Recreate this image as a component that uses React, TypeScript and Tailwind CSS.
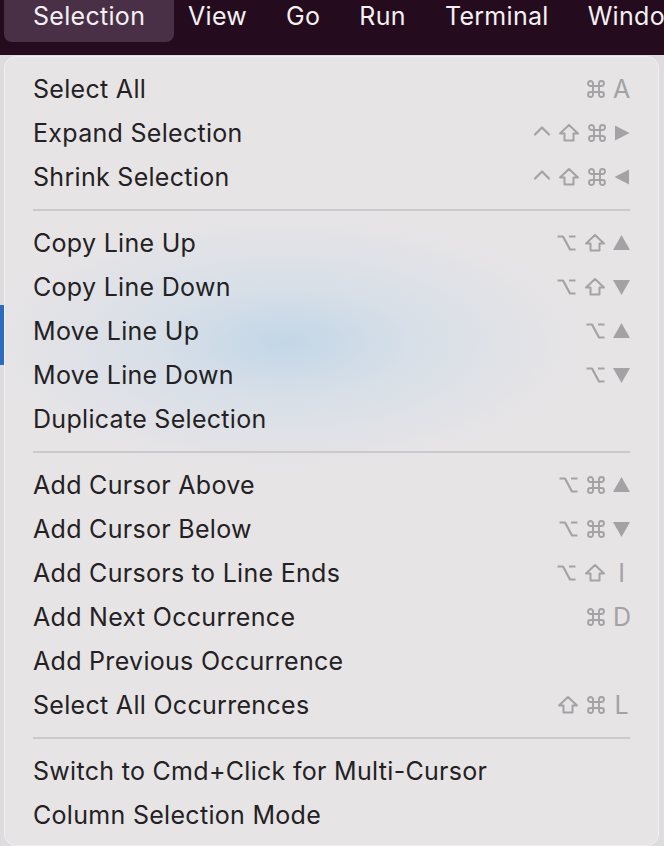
import React from "react";

type Key = "cmd" | "shift" | "ctrl" | "opt" | "right" | "left" | "up" | "down" | string;

type Item = { label: string; keys?: Key[] };

const groups: Item[][] = [
  [
    { label: "Select All", keys: ["cmd", "A"] },
    { label: "Expand Selection", keys: ["ctrl", "shift", "cmd", "right"] },
    { label: "Shrink Selection", keys: ["ctrl", "shift", "cmd", "left"] },
  ],
  [
    { label: "Copy Line Up", keys: ["opt", "shift", "up"] },
    { label: "Copy Line Down", keys: ["opt", "shift", "down"] },
    { label: "Move Line Up", keys: ["opt", "up"] },
    { label: "Move Line Down", keys: ["opt", "down"] },
    { label: "Duplicate Selection" },
  ],
  [
    { label: "Add Cursor Above", keys: ["opt", "cmd", "up"] },
    { label: "Add Cursor Below", keys: ["opt", "cmd", "down"] },
    { label: "Add Cursors to Line Ends", keys: ["opt", "shift", "I"] },
    { label: "Add Next Occurrence", keys: ["cmd", "D"] },
    { label: "Add Previous Occurrence" },
    { label: "Select All Occurrences", keys: ["shift", "cmd", "L"] },
  ],
  [{ label: "Switch to Cmd+Click for Multi-Cursor" }, { label: "Column Selection Mode" }],
];

const gray = "#a4a2a4";

function KeyGlyph({ k }: { k: Key }) {
  const stroke = { fill: "none", stroke: gray, strokeWidth: 2.2, strokeLinejoin: "round" as const, strokeLinecap: "round" as const };
  switch (k) {
    case "cmd":
      return (
        <svg width="20" height="20" viewBox="0 0 20 20">
          <path
            d="M7 7V4.5A2.5 2.5 0 1 0 4.5 7H15.5A2.5 2.5 0 1 0 13 4.5V15.5A2.5 2.5 0 1 0 15.5 13H4.5A2.5 2.5 0 1 0 7 15.5Z"
            {...stroke}
            strokeWidth={1.9}
          />
        </svg>
      );
    case "shift":
      return (
        <svg width="22" height="20" viewBox="0 0 22 20">
          <path d="M11 2L20 10.5H15.5V17.5H6.5V10.5H2Z" {...stroke} strokeWidth={2} />
        </svg>
      );
    case "ctrl":
      return (
        <svg width="18" height="20" viewBox="0 0 18 20">
          <path d="M2 11.5L9 4.5L16 11.5" {...stroke} />
        </svg>
      );
    case "opt":
      return (
        <svg width="21" height="20" viewBox="0 0 21 20">
          <path d="M1.5 3.5H7L14 16.5H19.5M13 3.5H19.5" {...stroke} strokeLinecap="butt" />
        </svg>
      );
    case "right":
      return (
        <svg width="16" height="20" viewBox="0 0 16 20">
          <path d="M1 2.5L15.5 10L1 17.5Z" fill={gray} />
        </svg>
      );
    case "left":
      return (
        <svg width="16" height="20" viewBox="0 0 16 20">
          <path d="M15 2.5L0.5 10L15 17.5Z" fill={gray} />
        </svg>
      );
    case "up":
      return (
        <svg width="17" height="20" viewBox="0 0 17 20">
          <path d="M8.5 2L17 17H0Z" fill={gray} />
        </svg>
      );
    case "down":
      return (
        <svg width="17" height="20" viewBox="0 0 17 20">
          <path d="M0 3H17L8.5 18Z" fill={gray} />
        </svg>
      );
    default:
      return <span className="w-[17px] text-center text-[25px] leading-none text-[#a4a2a4]">{k}</span>;
  }
}

function Row({ item }: { item: Item }) {
  return (
    <div className="flex h-[44px] items-center justify-between">
      <span className="text-[25px] leading-none tracking-[0.3px] text-[#232123]">{item.label}</span>
      {item.keys && (
        <span className="flex items-center gap-[7px]">
          {item.keys.map((k, i) => (
            <KeyGlyph key={i} k={k} />
          ))}
        </span>
      )}
    </div>
  );
}

export default function App() {
  const menus = ["View", "Go", "Run", "Terminal", "Window"];
  return (
    <div
      className="relative h-[846px] w-[664px] overflow-hidden bg-[#dedcde]"
      style={{ fontFamily: "Inter, 'Noto Sans', sans-serif" }}
    >
      {/* menu bar */}
      <div className="flex h-[55px] items-start whitespace-nowrap bg-[#240c1e] text-[25px] tracking-[0.3px] text-[#f4f0f3]">
        <div className="ml-[4px] flex h-[42px] w-[170px] shrink-0 items-center rounded-b-[8px] bg-[#4a3047] pl-[29px] pb-[8px]">
          Selection
        </div>
        <div className="flex h-[34px] shrink-0 items-center gap-[39px] pl-[14px]">
          {menus.map((m) => (
            <span key={m}>{m}</span>
          ))}
        </div>
      </div>

      {/* window behind */}
      <div className="absolute left-0 top-[305px] h-[60px] w-[4px] bg-[#2d6bbf]" />

      {/* dropdown */}
      <div className="absolute left-[4px] top-[56px] w-[655px] overflow-hidden rounded-[12px] border border-[#f1eff1] bg-[#e7e4e6]">
        <div className="pointer-events-none absolute inset-0 bg-[radial-gradient(ellipse_300px_130px_at_280px_285px,rgba(186,211,232,0.8),rgba(202,219,233,0.5)_45%,rgba(231,228,230,0)_100%)]" />
        <div className="relative px-[28px] pt-[10px] pb-[8px]">
          {groups.map((g, gi) => (
            <div key={gi}>
              {gi > 0 && (
                <div className="flex h-[22px] items-center">
                  <div className="h-[2px] w-full bg-[#cbc9cb]" />
                </div>
              )}
              {g.map((item) => (
                <Row key={item.label} item={item} />
              ))}
            </div>
          ))}
        </div>
      </div>
    </div>
  );
}
